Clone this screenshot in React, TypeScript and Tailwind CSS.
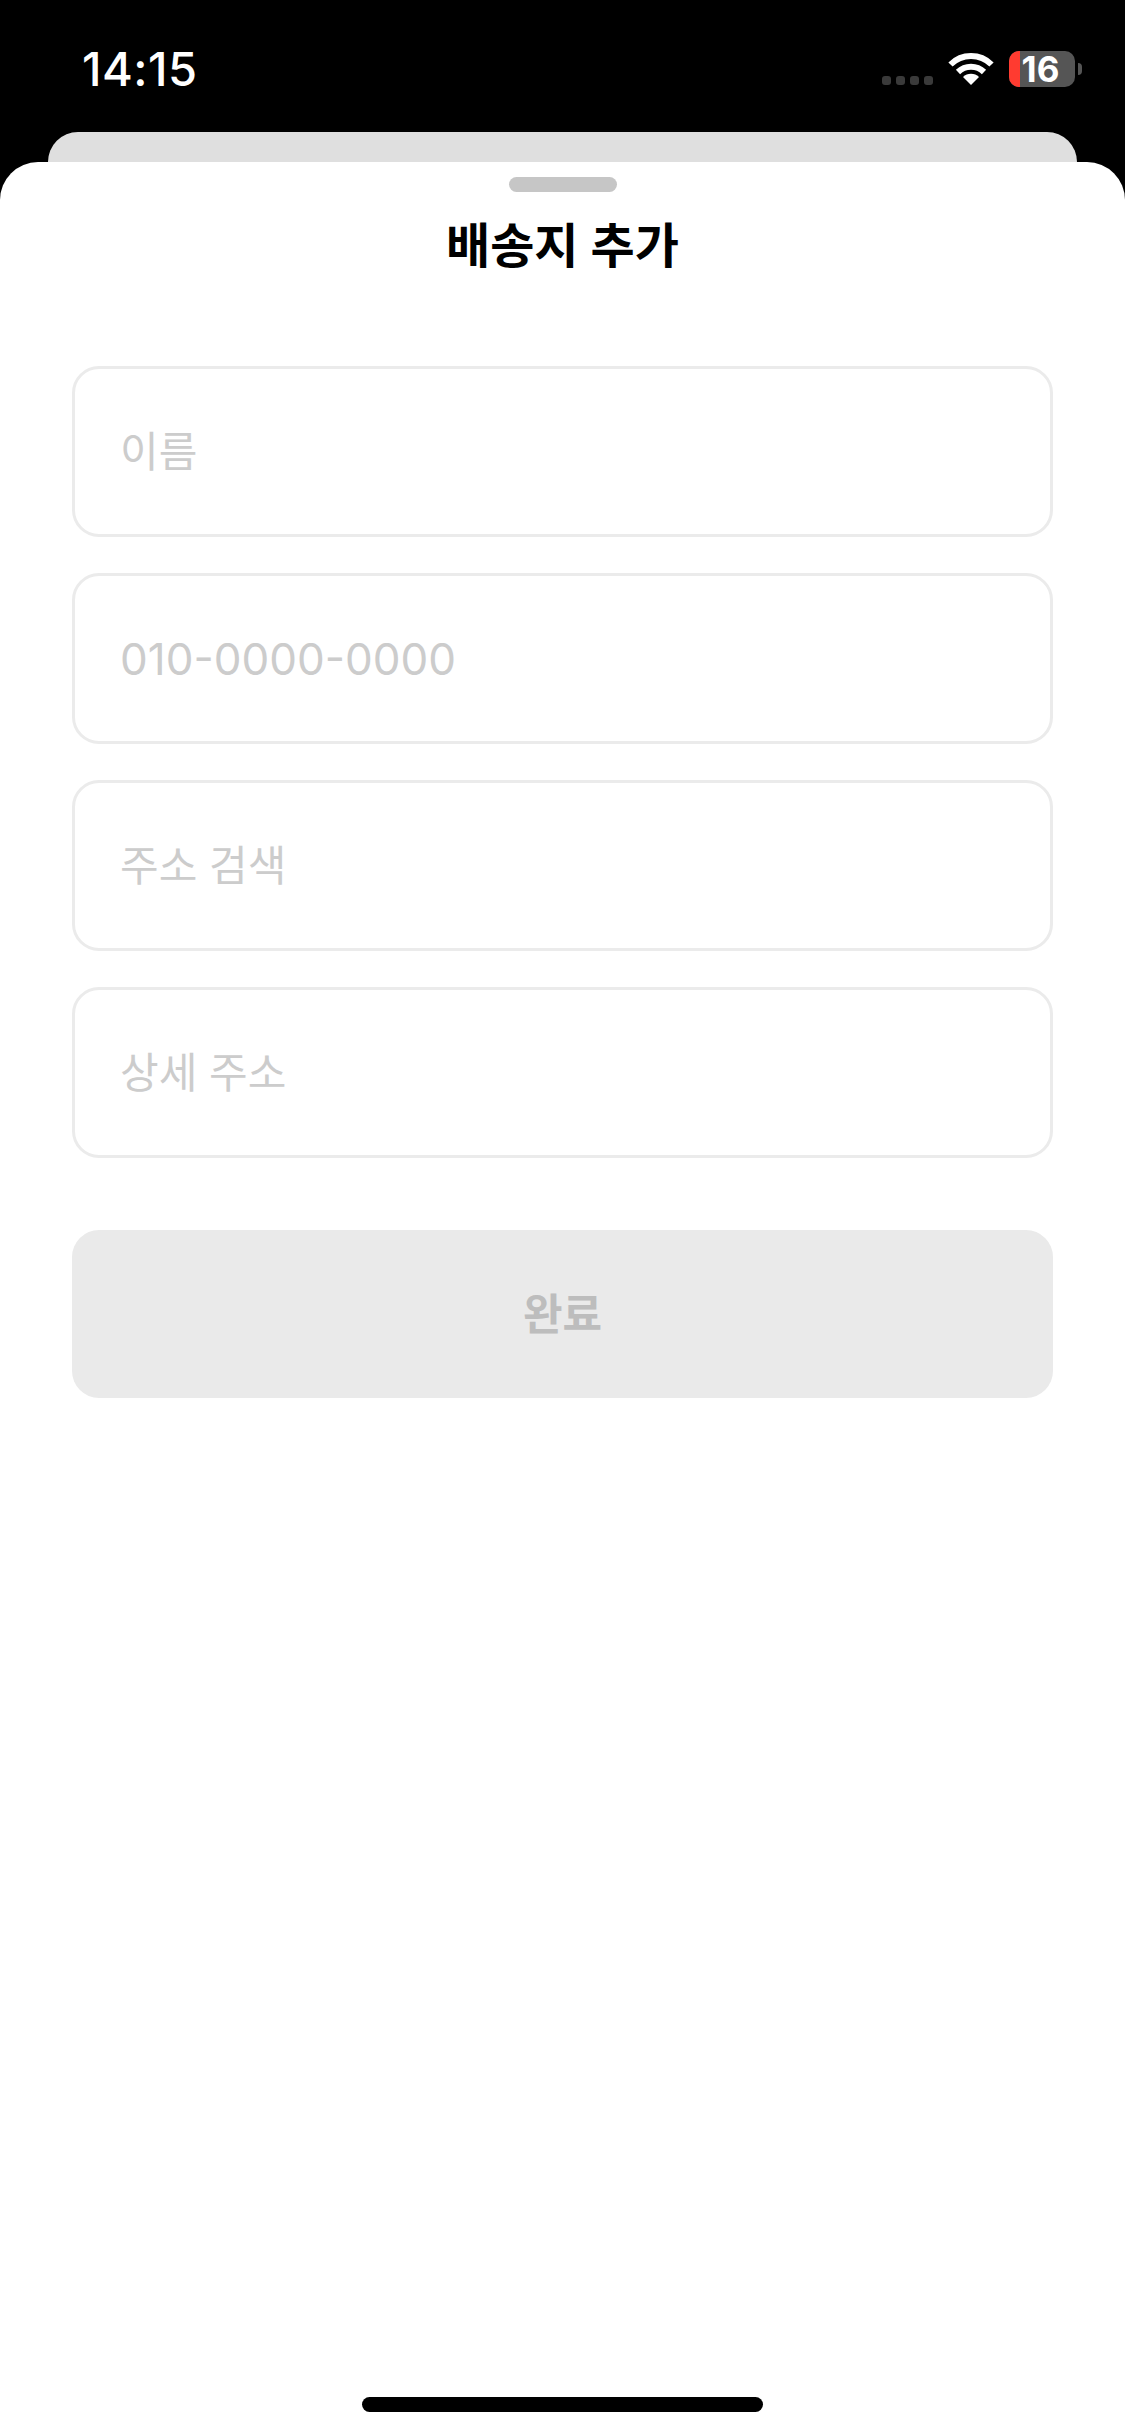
const SANS = "font-['Inter','Noto_Sans_CJK_KR',sans-serif]";

const FIELDS = [
    { label: "이름", size: "text-[42px]" },
    { label: "010-0000-0000", size: "text-[44px]" },
    { label: "주소 검색", size: "text-[42px]" },
    { label: "상세 주소", size: "text-[42px]" },
];

function WifiIcon() {
    return (
        <svg width="46" height="33" viewBox="0 0 46 33" fill="none">
            <path d="M2.5 12.5A29 29 0 0 1 43.5 12.5" stroke="#fff" strokeWidth="6" />
            <path d="M10 20A18.5 18.5 0 0 1 36 20" stroke="#fff" strokeWidth="6" />
            <path d="M23 33L15 25A11.5 11.5 0 0 1 31 25Z" fill="#fff" />
        </svg>
    );
}

function StatusBar() {
    return (
        <div className="h-[132px] shrink-0 flex items-start justify-between pl-[82px] pr-[43px]">
            <span className={`${SANS} mt-[41px] text-[47px] leading-[56px] font-medium tracking-[0.5px] text-white`}>14:15</span>
            <div className="flex items-start mt-[51px]">
                <div className="flex gap-[5px] mt-[25px] mr-[15px]">
                    <div className="w-[9px] h-[9px] rounded-[3px] bg-[#3a3a3a]" />
                    <div className="w-[9px] h-[9px] rounded-[3px] bg-[#3a3a3a]" />
                    <div className="w-[9px] h-[9px] rounded-[3px] bg-[#3a3a3a]" />
                    <div className="w-[9px] h-[9px] rounded-[3px] bg-[#3a3a3a]" />
                </div>
                <div className="mt-px mr-[15px]">
                    <WifiIcon />
                </div>
                <div className="relative w-[66px] h-[36px] rounded-[10px] bg-[#555555] flex items-center justify-center">
                    <div className="absolute left-0 top-0 bottom-0 w-[11px] rounded-l-[10px] bg-[#ff3b30]" />
                    <span className={`${SANS} relative -ml-[3px] text-[35px] leading-none font-bold text-white`}>16</span>
                </div>
                <div className="w-[4px] h-[12px] mt-[12px] ml-[3px] rounded-r-full bg-[#555555]" />
            </div>
        </div>
    );
}

export default function App() {
    return (
        <div className={`${SANS} w-[1125px] h-[2436px] bg-black flex flex-col overflow-hidden`}>
            <StatusBar />
            <div className="h-[30px] shrink-0 mx-[48px] rounded-t-[36px] bg-[#dfdfdf]" />
            <div className="flex-1 flex flex-col items-center bg-white rounded-t-[38px]">
                <div className="w-[108px] h-[15px] mt-[15px] rounded-full bg-[#c6c6c6]" />
                <h1 className="mt-[24px] h-[60px] text-[48px] leading-[60px] font-semibold text-black">배송지 추가</h1>
                <div className="w-[981px] mt-[90px] flex flex-col gap-[36px]">
                    {FIELDS.map((field) => (
                        <div
                            key={field.label}
                            className={`${field.size} h-[171px] px-[45px] flex items-center rounded-[27px] border-[3px] border-[#ebebeb] bg-white text-[#cccccc]`}
                        >
                            {field.label}
                        </div>
                    ))}
                </div>
                <div className="w-[981px] h-[168px] mt-[72px] flex items-center justify-center rounded-[27px] bg-[#eaeaea] text-[43px] font-semibold text-[#bdbdbd]">
                    완료
                </div>
                <div className="w-[401px] h-[15px] mt-auto mb-[24px] rounded-full bg-black" />
            </div>
        </div>
    );
}
